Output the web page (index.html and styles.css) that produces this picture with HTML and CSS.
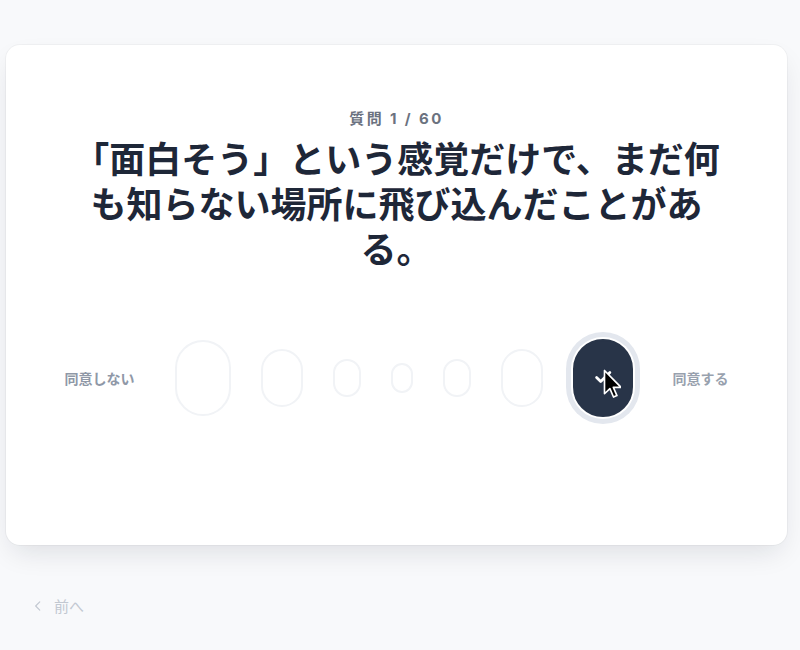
FILE: index.html
```html
<!DOCTYPE html>
<html lang="ja">
<head>
<meta charset="utf-8">
<link rel="stylesheet" href="styles.css">
</head>
<body>
<main class="page">
  <section class="card">
    <p class="counter">質問 1 / 60</p>
    <h1 class="question">「面白そう」という感覚だけで、まだ何も知らない場所に飛び込んだことがある。</h1>
    <div class="scale">
      <span class="label label-left">同意しない</span>
      <div class="options">
        <button class="opt opt-1" aria-label="1"></button>
        <button class="opt opt-2" aria-label="2"></button>
        <button class="opt opt-3" aria-label="3"></button>
        <button class="opt opt-4" aria-label="4"></button>
        <button class="opt opt-5" aria-label="5"></button>
        <button class="opt opt-6" aria-label="6"></button>
        <button class="opt opt-7 selected" aria-label="7">
          <svg class="check" viewBox="0 0 24 24" width="22" height="22"><path d="M5 12.5l4.5 4.5L19.5 7" fill="none" stroke="#fff" stroke-width="3" stroke-linecap="round" stroke-linejoin="round"/></svg>
          <svg class="cursor" viewBox="0 0 12 20" width="18" height="30"><path d="M1 1v15.5l3.6-3.4 2.4 5.6 2.3-1-2.4-5.5H12z" fill="#000" stroke="#fff" stroke-width="1.1" stroke-linejoin="round"/></svg>
        </button>
      </div>
      <span class="label label-right">同意する</span>
    </div>
  </section>
  <nav class="footer">
    <button class="prev">
      <svg viewBox="0 0 24 24" width="14" height="14"><path d="M15 5l-7 7 7 7" fill="none" stroke="currentColor" stroke-width="2" stroke-linecap="round" stroke-linejoin="round"/></svg>
      <span>前へ</span>
    </button>
  </nav>
</main>
</body>
</html>
```
FILE: styles.css
```css
* { box-sizing: border-box; }
html, body { margin: 0; padding: 0; }
body {
  background: #f8f9fb;
  font-family: Inter, "Noto Sans CJK JP", sans-serif;
  color: #1e293b;
  width: 800px;
  height: 650px;
  overflow: hidden;
}
.page {
  padding: 45px 13px 0 6px;
}
.card {
  background: #fff;
  height: 500px;
  border-radius: 14px;
  box-shadow: 0 12px 28px -6px rgba(15, 23, 42, 0.12), 0 0 0 1px rgba(15, 23, 42, 0.035);
  padding-top: 63px;
  display: flex;
  flex-direction: column;
  align-items: center;
}
.counter {
  margin: 0;
  font-size: 15px;
  line-height: 22px;
  font-weight: 700;
  letter-spacing: 0.16em;
  color: #6b7280;
}
.question {
  margin: 5px 0 0;
  max-width: 672px;
  text-align: center;
  font-family: "Noto Sans CJK JP", sans-serif;
  font-size: 36px;
  line-height: 45px;
  font-weight: 700;
  color: #1e2738;
}
.scale {
  margin-top: 68px;
  display: flex;
  align-items: center;
  gap: 40px;
}
.label {
  font-size: 14px;
  font-weight: 700;
  color: #8f98a7;
}
.label-right { color: #98a1ae; }
.options {
  display: flex;
  align-items: center;
  gap: 30px;
  height: 80px;
}
.opt {
  position: relative;
  padding: 0;
  border: 2px solid #f1f3f6;
  background: #fff;
  border-radius: 9999px;
}
.opt-1 { width: 56px; height: 76px; }
.opt-2 { width: 42px; height: 58px; }
.opt-3 { width: 28px; height: 38px; }
.opt-4 { width: 22px; height: 30px; }
.opt-5 { width: 28px; height: 38px; }
.opt-6 { width: 42px; height: 58px; }
.opt-7 { width: 60px; height: 78px; }
.opt.selected {
  background: #283448;
  border-color: #283448;
  box-shadow: 0 0 0 2px #fff, 0 0 0 7px #e3e7ee;
}
.check {
  position: absolute;
  left: 17px;
  top: 25px;
}
.cursor {
  position: absolute;
  left: 28px;
  top: 28px;
}
.footer {
  margin-top: 50px;
  padding-left: 25px;
}
.prev {
  display: flex;
  align-items: center;
  gap: 9px;
  background: none;
  border: 0;
  padding: 0;
  font-family: "Noto Sans CJK JP", sans-serif;
  font-size: 15px;
  color: #c2c8d1;
}
```
